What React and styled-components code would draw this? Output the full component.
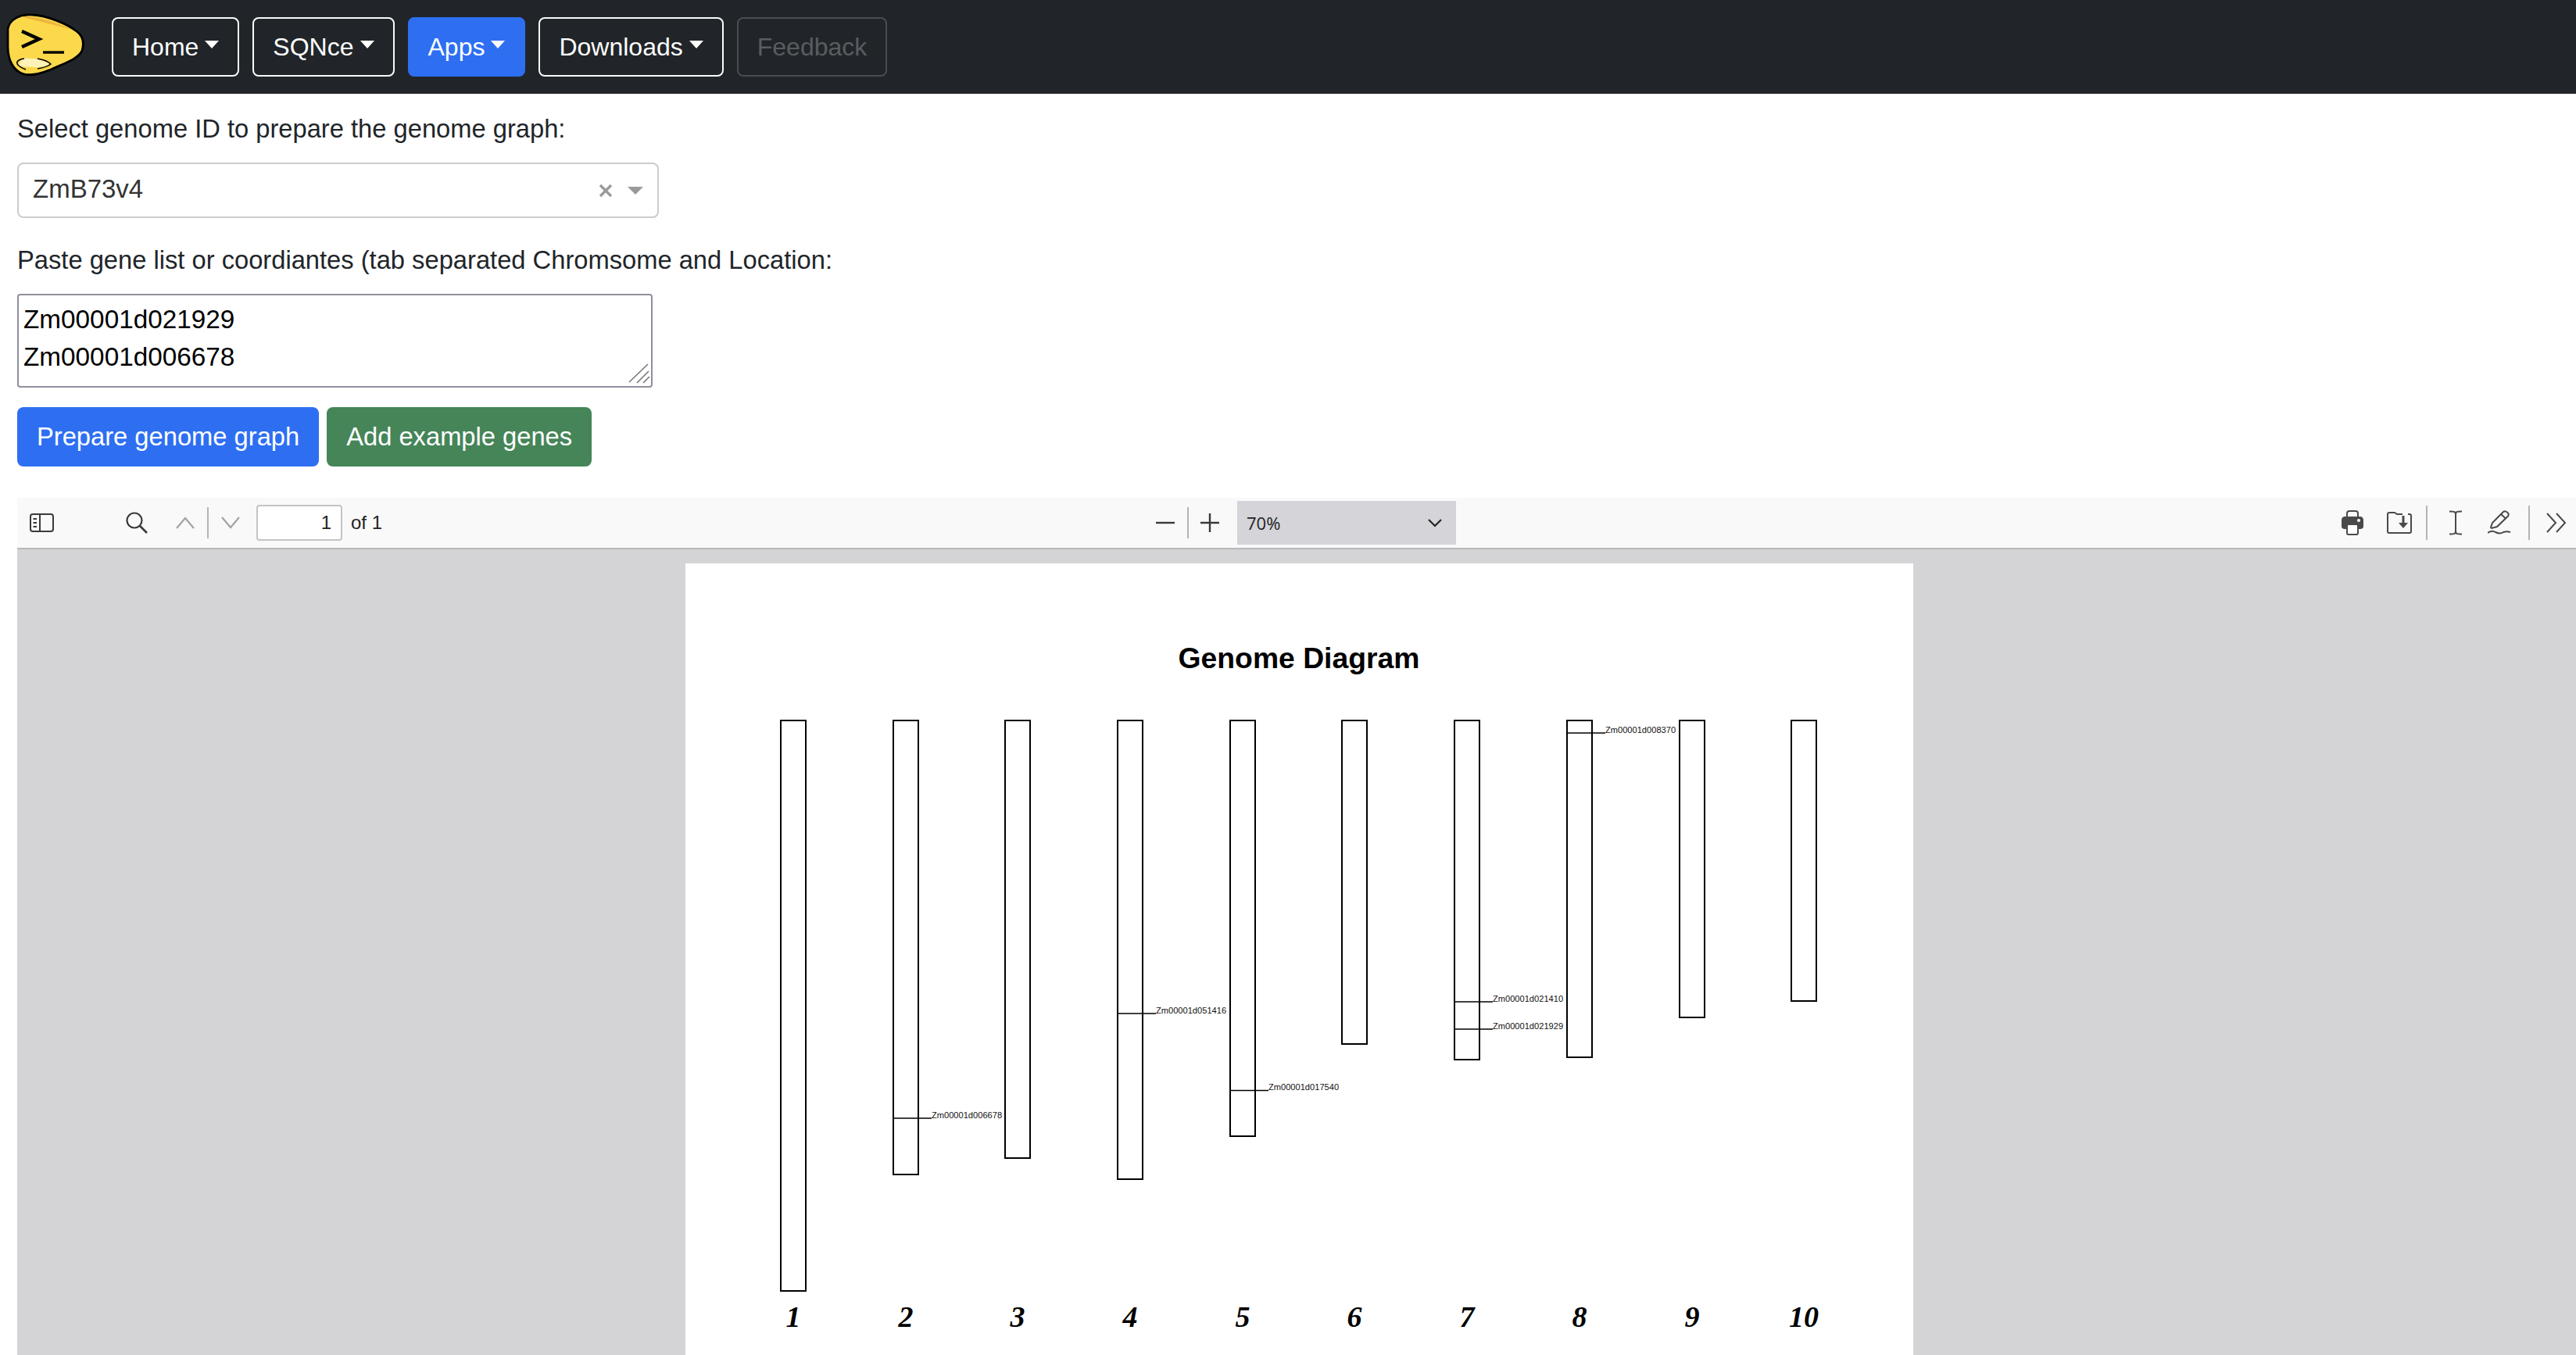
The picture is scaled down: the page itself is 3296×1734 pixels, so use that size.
import React from 'react';
import styled, { createGlobalStyle } from 'styled-components';

const GlobalStyle = createGlobalStyle`
  html, body {
    margin: 0;
    padding: 0;
    height: 1734px;
    overflow: hidden;
    background: #fff;
    font-family: "Liberation Sans", Arial, sans-serif;
  }
  * { box-sizing: border-box; }
`;

const Nav = styled.nav`
  display: flex;
  align-items: center;
  gap: 17px;
  height: 120px;
  background: #212529;
`;

const Logo = styled.svg`
  width: 110px;
  height: 120px;
  margin-right: 16px;
  flex: none;
`;

const NavButton = styled.button`
  display: inline-flex;
  align-items: center;
  height: 76px;
  padding: 0 24px;
  font: 32px "Liberation Sans", Arial, sans-serif;
  color: ${p => (p.$disabled ? '#595d61' : '#fff')};
  background: ${p => (p.$active ? '#2e6ff2' : 'transparent')};
  border: 2px solid ${p => (p.$active ? '#2e6ff2' : p.$disabled ? '#494d51' : '#f8f9fa')};
  border-radius: 8px;
`;

const Caret = styled.span`
  width: 0;
  height: 0;
  margin: -6px 0 0 8px;
  border-top: 10px solid currentColor;
  border-left: 9.6px solid transparent;
  border-right: 9.6px solid transparent;
`;

const Form = styled.section`
  padding: 21px 0 40px 22px;
`;

const FieldLabel = styled.div`
  font-size: 32.7px;
  line-height: 48px;
  color: #212529;
  margin-top: ${p => p.$top || 0}px;
  margin-bottom: 19px;
`;

const SelectBox = styled.div`
  display: flex;
  align-items: center;
  width: 821px;
  height: 71px;
  padding: 0 18px;
  color: #333;
  font-size: 33px;
  border: 2px solid #ccc;
  border-radius: 8px;
`;

const SelectValue = styled.span`
  flex: 1;
  margin-top: -3px;
`;

const Clear = styled.svg`
  width: 20px;
  height: 20px;
  margin-right: 18px;
`;

const SelectArrow = styled.span`
  width: 0;
  height: 0;
  border-top: 10px solid #999;
  border-left: 10px solid transparent;
  border-right: 10px solid transparent;
`;

const AreaWrap = styled.div`
  position: relative;
  width: 813px;
  height: 120px;
`;

const GeneArea = styled.textarea`
  display: block;
  width: 100%;
  height: 100%;
  padding: 7px 6px;
  font: 33.3px/48px "Liberation Sans", Arial, sans-serif;
  color: #000;
  border: 2px solid #8f8f9d;
  border-radius: 4px;
  resize: none;
  outline: none;
`;

const Grip = styled.svg`
  position: absolute;
  right: 3px;
  bottom: 5px;
  width: 28px;
  height: 26px;
`;

const Actions = styled.div`
  display: flex;
  gap: 10px;
  margin-top: 25px;
`;

const ActionButton = styled.button`
  height: 76px;
  padding: 0 25px;
  font: 32.7px "Liberation Sans", Arial, sans-serif;
  color: #fff;
  background: ${p => p.$bg};
  border: none;
  border-radius: 8px;
`;

const Viewer = styled.section`
  margin-left: 22px;
  height: 1097px;
  display: flex;
  flex-direction: column;
  background: #d4d4d7;
  overflow: hidden;
`;

const Toolbar = styled.div`
  display: grid;
  grid-template-columns: 1457px 384px 1fr;
  align-items: center;
  height: 66px;
  flex: none;
  background: #f9f9fa;
  border-bottom: 2px solid #b8b8bb;
  color: #3a3a3c;
`;

const ToolGroup = styled.div`
  display: flex;
  align-items: center;
  height: 100%;
  padding-left: ${p => p.$left || 0}px;
  justify-content: ${p => (p.$end ? 'flex-end' : 'flex-start')};
  padding-right: ${p => p.$right || 0}px;
`;

const ToolIcon = styled.svg`
  flex: none;
  width: ${p => p.$w}px;
  height: ${p => p.$h || p.$w}px;
  margin-left: ${p => p.$ml || 0}px;
`;

const ToolSep = styled.span`
  flex: none;
  width: 2px;
  height: ${p => p.$h || 40}px;
  margin-left: ${p => p.$ml || 0}px;
  background: #b4b4b6;
`;

const PageInput = styled.div`
  width: 110px;
  height: 46px;
  margin-left: 21px;
  padding-right: 12px;
  text-align: right;
  font: 24px/42px "Liberation Sans", Arial, sans-serif;
  color: #222;
  background: #fff;
  border: 2px solid #c4c4c6;
  border-radius: 4px;
`;

const PageCount = styled.span`
  margin-left: 11px;
  font-size: 24px;
  color: #222;
`;

const ZoomSelect = styled.div`
  display: flex;
  align-items: center;
  justify-content: space-between;
  width: 280px;
  height: 56px;
  margin-left: 23px;
  padding: 0 18px 0 12px;
  background: #d4d4d9;
  font: 22px "Open Sans", sans-serif;
  color: #222;
`;

const PageArea = styled.div`
  flex: 1;
  padding: 18px 0 0 855px;
  overflow: hidden;
`;

const Sheet = styled.div`
  width: 1571px;
  height: 1100px;
  background: #fff;
`;

const Diagram = styled.svg`
  display: block;
`;

const DiagramTitle = styled.text`
  font: bold 37.3px "Liberation Sans", Arial, sans-serif;
  fill: #000;
  text-anchor: middle;
`;

const GeneLabel = styled.text`
  font: 11.1px "Liberation Sans", Arial, sans-serif;
  fill: #111;
`;

const ChromNumber = styled.text`
  font: italic bold 38px "Liberation Serif", "Times New Roman", serif;
  fill: #000;
  text-anchor: middle;
`;

// page coordinates are screen px minus the sheet origin
const SHEET_X = 877;
const SHEET_Y = 721;

const chromosomes = [
  { n: 1, x: 999, bottom: 1652, genes: [] },
  { n: 2, x: 1142.6, bottom: 1503, genes: [{ y: 1431, name: 'Zm00001d006678' }] },
  { n: 3, x: 1286, bottom: 1482, genes: [] },
  { n: 4, x: 1430, bottom: 1509, genes: [{ y: 1297, name: 'Zm00001d051416' }] },
  { n: 5, x: 1574, bottom: 1454, genes: [{ y: 1395.5, name: 'Zm00001d017540' }] },
  { n: 6, x: 1717, bottom: 1336, genes: [] },
  { n: 7, x: 1861, bottom: 1356, genes: [{ y: 1282, name: 'Zm00001d021410' }, { y: 1317, name: 'Zm00001d021929' }] },
  { n: 8, x: 2005, bottom: 1353, genes: [{ y: 938, name: 'Zm00001d008370' }] },
  { n: 9, x: 2149, bottom: 1302, genes: [] },
  { n: 10, x: 2292, bottom: 1281, genes: [] },
];

const CHROM_TOP = 922;
const CHROM_W = 32;

const Chromosome = ({ n, x, bottom, genes }) => {
  const left = Math.round(x - SHEET_X);
  const top = CHROM_TOP - SHEET_Y;
  return (
    <g>
      <rect x={left} y={top} width={CHROM_W} height={bottom - CHROM_TOP} fill="none" stroke="#000" strokeWidth="2" />
      {genes.map(g => (
        <g key={g.name}>
          <line x1={left} x2={left + CHROM_W + 17} y1={g.y - SHEET_Y} y2={g.y - SHEET_Y} stroke="#000" strokeWidth="1.6" />
          <GeneLabel x={left + CHROM_W + 17} y={g.y - SHEET_Y - 0.5}>{g.name}</GeneLabel>
        </g>
      ))}
      <ChromNumber x={left + CHROM_W / 2} y={1698 - SHEET_Y}>{n}</ChromNumber>
    </g>
  );
};

const navItems = [
  { label: 'Home' },
  { label: 'SQNce' },
  { label: 'Apps', active: true },
  { label: 'Downloads' },
];

export default function App() {
  return (
    <>
      <GlobalStyle />
      <Nav>
        <Logo viewBox="0 0 110 120">
          <path d="M10 37C12 25 25 18 42 19C60 20 85 30 98 40C106 46 108 55 105 65C100 75 85 80 65 89C50 95 38 98 28 94C18 90 10 78 10 60Z" fill="#fbd94a" stroke="#000" strokeWidth="2.8" />
          <path d="M26 21C45 20 70 27 92 38C70 32 45 26 26 21Z" fill="#eeb53e" />
          <path d="M28 40L50 50L28 60" fill="none" stroke="#000" strokeWidth="4.4" />
          <path d="M55 67H82" stroke="#000" strokeWidth="3.4" />
          <path d="M28 75C40 73 56 76 64 82C55 88 35 86 24 84Z" fill="#fdf3b8" />
          <path d="M31 75C23 76 19 80 24 84C27 87 30 88 33 89M48 75C54 76 62 79 65 82C60 86 54 87 48 88" fill="none" stroke="#000" strokeWidth="1.6" />
        </Logo>
        {navItems.map(item => (
          <NavButton key={item.label} $active={item.active}>
            {item.label}
            <Caret />
          </NavButton>
        ))}
        <NavButton $disabled>Feedback</NavButton>
      </Nav>

      <Form>
        <FieldLabel>Select genome ID to prepare the genome graph:</FieldLabel>
        <SelectBox>
          <SelectValue>ZmB73v4</SelectValue>
          <Clear viewBox="0 0 20 20">
            <path d="M3 3L17 17M17 3L3 17" stroke="#999" strokeWidth="3.2" />
          </Clear>
          <SelectArrow />
        </SelectBox>
        <FieldLabel $top={30}>Paste gene list or coordiantes (tab separated Chromsome and Location:</FieldLabel>
        <AreaWrap>
          <GeneArea defaultValue={'Zm00001d021929\nZm00001d006678'} />
          <Grip viewBox="0 0 28 26">
            <path d="M1 24L25 1M11 25L26 10M19 25L27 17" stroke="#777" strokeWidth="1.6" fill="none" />
          </Grip>
        </AreaWrap>
        <Actions>
          <ActionButton $bg="#2e6ff2">Prepare genome graph</ActionButton>
          <ActionButton $bg="#458558">Add example genes</ActionButton>
        </Actions>
      </Form>

      <Viewer>
        <Toolbar>
          <ToolGroup $left={16}>
            <ToolIcon $w={31} $h={24} viewBox="0 0 31 24" fill="none" stroke="currentColor">
              <rect x="1" y="1" width="29" height="22" rx="3" strokeWidth="2" />
              <path d="M13 1V23" strokeWidth="2" />
              <path d="M4.5 7H9M4.5 12H9M4.5 17H9" strokeWidth="2" />
            </ToolIcon>
            <ToolIcon $w={30} $ml={91} viewBox="0 0 30 30" fill="none" stroke="currentColor">
              <circle cx="12" cy="12" r="9.5" strokeWidth="2.2" />
              <path d="M19 19L28 28" strokeWidth="2.6" />
            </ToolIcon>
            <ToolIcon $w={24} $ml={35} viewBox="0 0 24 24" fill="none" stroke="#a3a3a6">
              <path d="M1 19L12 6L23 19" strokeWidth="2.2" />
            </ToolIcon>
            <ToolSep $ml={16} />
            <ToolIcon $w={24} $ml={16} viewBox="0 0 24 24" fill="none" stroke="#a3a3a6">
              <path d="M1 5L12 18L23 5" strokeWidth="2.2" />
            </ToolIcon>
            <PageInput>1</PageInput>
            <PageCount>of 1</PageCount>
          </ToolGroup>
          <ToolGroup>
            <ToolIcon $w={24} viewBox="0 0 24 24" stroke="currentColor">
              <path d="M0 12H24" strokeWidth="2.4" />
            </ToolIcon>
            <ToolSep $ml={16} />
            <ToolIcon $w={24} $ml={15} viewBox="0 0 24 24" stroke="currentColor">
              <path d="M0 12H24M12 0V24" strokeWidth="2.4" />
            </ToolIcon>
            <ZoomSelect>
              <span>70%</span>
              <svg width="18" height="12" viewBox="0 0 18 12" fill="none" stroke="#222">
                <path d="M1 2L9 10L17 2" strokeWidth="2.2" />
              </svg>
            </ZoomSelect>
          </ToolGroup>
          <ToolGroup $end $right={12}>
            <ToolIcon $w={28} $h={32} viewBox="0 0 28 32">
              <path d="M7 9V4C7 2 8 1 10 1H18C20 1 21 2 21 4V9" fill="none" stroke="#4a4a4c" strokeWidth="2" />
              <path d="M4 8H24C26 8 28 10 28 12V21C28 23 26 24 24 24H22V20H6V24H4C2 24 0 23 0 21V12C0 10 2 8 4 8Z" fill="#4a4a4c" />
              <circle cx="22" cy="13" r="2" fill="#fff" />
              <rect x="7" y="18" width="14" height="13" rx="2" fill="#fff" stroke="#4a4a4c" strokeWidth="2" />
            </ToolIcon>
            <ToolIcon $w={32} $h={28} $ml={30} viewBox="0 0 32 28" fill="none" stroke="#4a4a4c">
              <path d="M20 3H13L10 1H3C2 1 1 2 1 3V25C1 26 2 27 3 27H29C30 27 31 26 31 25V5C31 4 30 3 29 3H27" strokeWidth="2" />
              <path d="M21 5V15" strokeWidth="3" />
              <path d="M15 14H27L21 21Z" fill="#4a4a4c" stroke="none" />
            </ToolIcon>
            <ToolSep $ml={18} $h={44} />
            <ToolIcon $w={16} $h={32} $ml={28} viewBox="0 0 16 32" fill="none" stroke="#4a4a4c">
              <path d="M0 1.5C4 1.5 8 1 8 5V27C8 31 4 30.5 0 30.5M16 1.5C12 1.5 8 1 8 5M16 30.5C12 30.5 8 31 8 27" strokeWidth="2" />
            </ToolIcon>
            <ToolIcon $w={30} $h={32} $ml={33} viewBox="0 0 30 32" fill="none" stroke="#4a4a4c">
              <path d="M4 22L6 16L20 2C21 1 23 1 25 2.5C27 4 27 6 26 7.5L12 21L5 23Z" strokeWidth="2" />
              <path d="M17 5L23 10.5" strokeWidth="2" />
              <path d="M0 29C4 26 7 26 10 28C14 30 17 30 20 28C23 27 26 27 29 28" strokeWidth="2" />
            </ToolIcon>
            <ToolSep $ml={22} $h={44} />
            <ToolIcon $w={26} $h={26} $ml={21} viewBox="0 0 26 26" fill="none" stroke="#4a4a4c">
              <path d="M1 1L12 13L1 25M13 1L24 13L13 25" strokeWidth="2" />
            </ToolIcon>
          </ToolGroup>
        </Toolbar>
        <PageArea>
          <Sheet>
            <Diagram width="1571" height="1100" viewBox="0 0 1571 1100">
              <DiagramTitle x={785} y={134}>Genome Diagram</DiagramTitle>
              {chromosomes.map(c => (
                <Chromosome key={c.n} {...c} />
              ))}
            </Diagram>
          </Sheet>
        </PageArea>
      </Viewer>
    </>
  );
}
